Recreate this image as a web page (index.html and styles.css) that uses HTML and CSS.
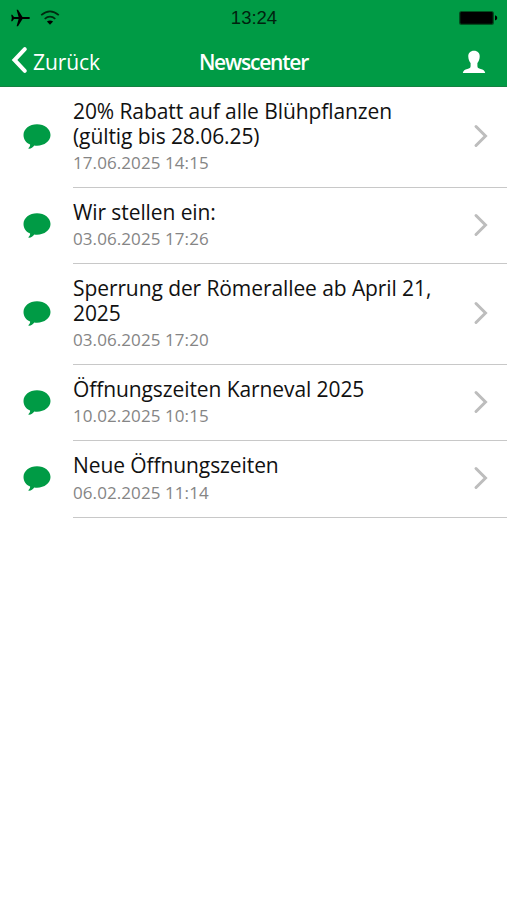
FILE: index.html
```html
<!DOCTYPE html>
<html lang="de">
<head>
<meta charset="utf-8">
<title>Newscenter</title>
<link rel="stylesheet" href="styles.css">
</head>
<body>
<svg width="0" height="0" class="defs" aria-hidden="true">
  <symbol id="bubble" viewBox="0 0 27 25"><path d="M13.500.3C21 .3 27 5 27 11s-6 10.700-13.500 10.700q-1.500 0-2.700-.2C9.300 23.500 7.800 24.600 5.500 24.800c-.6 0-.7-.6-.2-1 1-.8 1.400-1.800 1.300-3.200C2.500 18.800 0 15.300 0 11 0 5 6 .3 13.500.3z" fill="#009b45"/></symbol>
  <symbol id="chevron" viewBox="0 0 16 24"><path d="M3 2.500 12.500 12 3 21.500" fill="none" stroke="#bdbdbd" stroke-width="3" stroke-linecap="round" stroke-linejoin="miter"/></symbol>
</svg>
<header class="header">
  <div class="status">
    <div class="signals">
      <svg width="20" height="18" viewBox="0 0 20 18"><path d="M20 9c0 .8-.8 1.100-2 1.100h-5.500L8 17.200H6.600L8.600 10.100H4L2.300 12.200H1.200L1.800 9 1.200 5.800H2.300L4 7.900h4.600L6.600.8H8l4.500 7.100H18c1.200 0 2 .3 2 1.100z"/></svg>
      <svg width="20" height="16" viewBox="0 0 20 16"><g fill="none" stroke="#002a10" stroke-width="1.700"><path d="M1.200 5.200q8.800-7.800 17.600 0"/><path d="M4.700 8.900q5.300-4.500 10.600 0"/></g><path d="M6.900 11.600q3.100-2.400 6.200 0L10 14.800z"/></svg>
    </div>
    <time class="clock">13:24</time>
    <svg class="battery" width="40" height="16" viewBox="0 0 40 16"><rect x="1" y=".9" width="35" height="14" rx="2.500" fill="#00501f"/><rect x="2.300" y="2" width="32.400" height="11.800" rx="1"/><path d="M37 5.200q2.300.8 2.300 2.700t-2.300 2.700z"/></svg>
  </div>
  <nav class="navbar">
    <a class="back"><svg width="17" height="28" viewBox="0 0 17 28"><path d="M13.800 3.200 3.500 14l10.300 10.800" fill="none" stroke="#fff" stroke-width="4" stroke-linecap="round"/></svg><span>Zurück</span></a>
    <h1 class="heading">Newscenter</h1>
    <svg class="user" width="24" height="24" viewBox="0 0 24 24"><path d="M12 .8c3.700 0 5.900 2.400 5.700 5.900-.1 3-1.300 5-2.300 6.300v3c0 1.800 1 2.300 3.300 3.100 2.400.8 4.100 1.500 4.500 3.900H.8c.4-2.400 2.100-3.100 4.500-3.900C7.600 18.300 8.600 17.800 8.600 16v-3C7.600 11.700 6.400 9.700 6.300 6.700 6.100 3.200 8.300.8 12 .8z" fill="#fff"/></svg>
  </nav>
</header>
<main class="list">
  <article class="row tall"><svg class="bubble"><use href="#bubble"/></svg><div class="content"><div class="text"><h2>20% Rabatt auf alle Blühpflanzen<br>(gültig bis 28.06.25)</h2><time>17.06.2025 14:15</time></div><svg class="chevron"><use href="#chevron"/></svg></div></article>
  <article class="row"><svg class="bubble"><use href="#bubble"/></svg><div class="content"><div class="text"><h2>Wir stellen ein:</h2><time>03.06.2025 17:26</time></div><svg class="chevron"><use href="#chevron"/></svg></div></article>
  <article class="row tall"><svg class="bubble"><use href="#bubble"/></svg><div class="content"><div class="text"><h2>Sperrung der Römerallee ab April 21,<br>2025</h2><time>03.06.2025 17:20</time></div><svg class="chevron"><use href="#chevron"/></svg></div></article>
  <article class="row"><svg class="bubble"><use href="#bubble"/></svg><div class="content"><div class="text"><h2>Öffnungszeiten Karneval 2025</h2><time>10.02.2025 10:15</time></div><svg class="chevron"><use href="#chevron"/></svg></div></article>
  <article class="row last"><svg class="bubble"><use href="#bubble"/></svg><div class="content"><div class="text"><h2>Neue Öffnungszeiten</h2><time>06.02.2025 11:14</time></div><svg class="chevron"><use href="#chevron"/></svg></div></article>
</main>
</body>
</html>
```
FILE: styles.css
```css
* { box-sizing: border-box; }
body { margin: 0; background: #fff; color: #111; font-family: "Open Sans", sans-serif; min-height: 900px; }
.defs { position: absolute; }
svg { display: block; flex: none; }
h1, h2 { margin: 0; font-weight: 400; }
.header { height: 87px; background: #009b45; border-bottom: 1px solid #148241; }
.status { height: 34px; display: grid; grid-template-columns: 1fr auto 1fr; align-items: center; padding: 0 9px 0 10px; }
.signals { display: flex; align-items: center; gap: 10px; }
.clock { font: 18.5px/34px "Liberation Sans", sans-serif; color: #00230f; padding-top: 1px; }
.battery { justify-self: end; }
.navbar { height: 52px; display: grid; grid-template-columns: 1fr auto 1fr; align-items: center; padding: 2px 21px 0 11px; color: #fff; }
.back { display: flex; align-items: center; gap: 5px; font-size: 21px; letter-spacing: -0.1px; line-height: 28px; }
.back svg { margin-top: -3px; }
.back span { padding-top: 2px; }
.heading { font-size: 21px; line-height: 28px; font-weight: 600; letter-spacing: -1.2px; padding: 2px 0 0 10px; }
.user { justify-self: end; margin-top: 2px; }
.row { display: flex; align-items: center; height: 76px; padding-left: 23px; }
.row.tall { height: 101px; }
.row.last { height: 77px; }
.bubble { width: 28px; height: 25px; margin: 0 22px 2px 0; }
.content { flex: 1; height: 100%; display: flex; align-items: center; justify-content: space-between; border-bottom: 1px solid #c8c8c8; padding-right: 18px; }
.text { height: 100%; padding-top: 12px; }
.text h2 { font-size: 21px; letter-spacing: -0.09px; line-height: 25.2px; white-space: nowrap; }
.text time { display: block; font-size: 17px; letter-spacing: 0.08px; line-height: 24px; margin-top: 2px; color: #858585; white-space: nowrap; }
.text time { position: static; }
.last time { margin-top: 3px; }
.chevron { width: 16px; height: 24px; margin-bottom: 2px; }
```
